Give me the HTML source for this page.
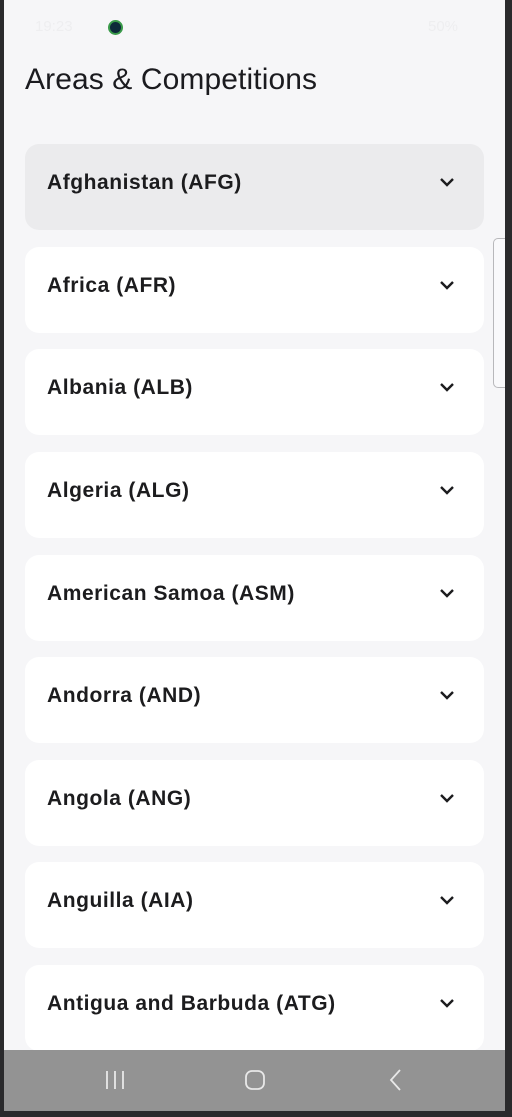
<!DOCTYPE html>
<html><head><meta charset="utf-8"><style>
*{margin:0;padding:0;box-sizing:border-box}
html,body{width:512px;height:1117px;overflow:hidden;background:#2a2a2c}
#scr{position:absolute;left:4px;top:0;width:501px;height:1111px;background:#f6f6f8;overflow:hidden}
.title{position:absolute;left:21px;top:63px;font:30px "Liberation Sans",sans-serif;color:#1b1b1f;letter-spacing:0.1px}
.card{position:absolute;left:21px;width:459px;height:86px;background:#fff;border-radius:14px}
.card.sel{background:#ebebed}
.card span{position:absolute;left:22px;top:0;font:bold 21px/78px "Liberation Sans",sans-serif;color:#1c1c1e;letter-spacing:0.55px}
.card svg{position:absolute;left:414px;top:32px}
.sb{position:absolute;left:489px;top:238px;width:14px;height:150px;border:1px solid #b8b8bb;border-right:none;border-radius:5px 0 0 5px;background:#f9f9fb}
.nav{position:absolute;left:0;top:1050px;width:501px;height:61px;background:#939393}
.status{position:absolute;top:18px;font:15px "Liberation Sans",sans-serif;color:#eeeef0}
</style></head><body>
<div id="scr">
<div class="status" style="left:31px">19:23</div>
<div style="position:absolute;left:104px;top:20px;width:15px;height:15px;border-radius:50%;background:#0d2a3a;border:2px solid #3a9a4a"></div>
<div class="status" style="left:424px">50%</div>
<div class="title">Areas &amp; Competitions</div>
<div class="card sel" style="top:144px"><span>Afghanistan (AFG)</span><svg width="16" height="12" viewBox="0 0 16 12"><path d="M2 3l6 6 6-6" fill="none" stroke="#1c1c1e" stroke-width="2.4"/></svg></div>
<div class="card" style="top:247px"><span>Africa (AFR)</span><svg width="16" height="12" viewBox="0 0 16 12"><path d="M2 3l6 6 6-6" fill="none" stroke="#1c1c1e" stroke-width="2.4"/></svg></div>
<div class="card" style="top:349px"><span>Albania (ALB)</span><svg width="16" height="12" viewBox="0 0 16 12"><path d="M2 3l6 6 6-6" fill="none" stroke="#1c1c1e" stroke-width="2.4"/></svg></div>
<div class="card" style="top:452px"><span>Algeria (ALG)</span><svg width="16" height="12" viewBox="0 0 16 12"><path d="M2 3l6 6 6-6" fill="none" stroke="#1c1c1e" stroke-width="2.4"/></svg></div>
<div class="card" style="top:555px"><span>American Samoa (ASM)</span><svg width="16" height="12" viewBox="0 0 16 12"><path d="M2 3l6 6 6-6" fill="none" stroke="#1c1c1e" stroke-width="2.4"/></svg></div>
<div class="card" style="top:657px"><span>Andorra (AND)</span><svg width="16" height="12" viewBox="0 0 16 12"><path d="M2 3l6 6 6-6" fill="none" stroke="#1c1c1e" stroke-width="2.4"/></svg></div>
<div class="card" style="top:760px"><span>Angola (ANG)</span><svg width="16" height="12" viewBox="0 0 16 12"><path d="M2 3l6 6 6-6" fill="none" stroke="#1c1c1e" stroke-width="2.4"/></svg></div>
<div class="card" style="top:862px"><span>Anguilla (AIA)</span><svg width="16" height="12" viewBox="0 0 16 12"><path d="M2 3l6 6 6-6" fill="none" stroke="#1c1c1e" stroke-width="2.4"/></svg></div>
<div class="card" style="top:965px"><span>Antigua and Barbuda (ATG)</span><svg width="16" height="12" viewBox="0 0 16 12"><path d="M2 3l6 6 6-6" fill="none" stroke="#1c1c1e" stroke-width="2.4"/></svg></div>
<div class="sb"></div>
<div class="nav">
<svg style="position:absolute;left:100px;top:19px" width="22" height="22" viewBox="0 0 22 22"><path d="M3 2v18M11 2v18M19 2v18" stroke="#e8e8e8" stroke-width="1.8"/></svg>
<svg style="position:absolute;left:240px;top:19px" width="22" height="22" viewBox="0 0 22 22"><rect x="2" y="2" width="18" height="18" rx="6" fill="none" stroke="#e8e8e8" stroke-width="1.8"/></svg>
<svg style="position:absolute;left:384px;top:18px" width="16" height="24" viewBox="0 0 16 24"><path d="M12 2L3 12l9 10" fill="none" stroke="#e8e8e8" stroke-width="1.8"/></svg>
</div>
</div>
</body></html>
